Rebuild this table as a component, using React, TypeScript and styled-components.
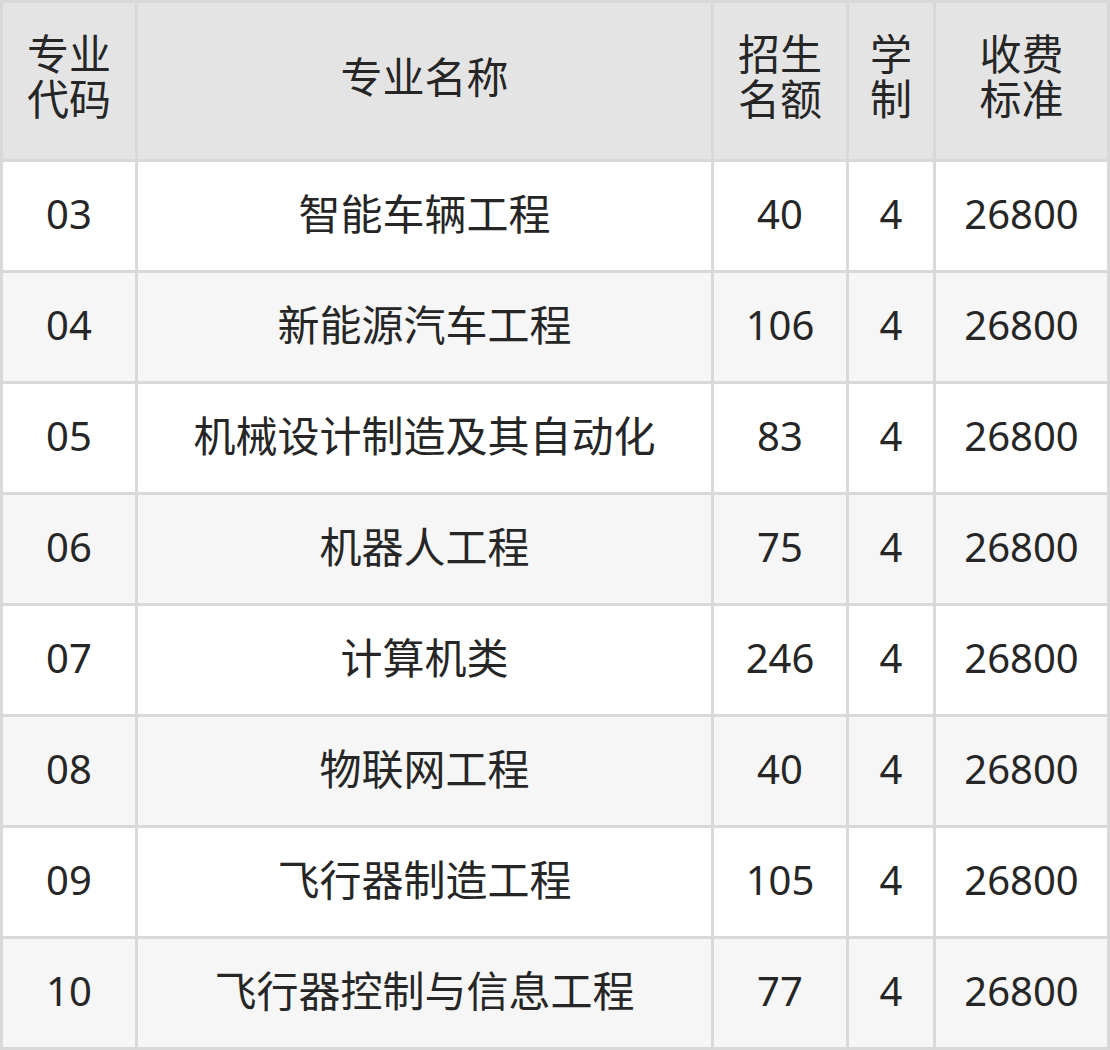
import React from 'react';
import styled, { createGlobalStyle } from 'styled-components';

interface Major {
    code: string;
    name: string;
    quota: number;
    years: number;
    fee: number;
}

const majors: Major[] = [
    { code: '03', name: '智能车辆工程', quota: 40, years: 4, fee: 26800 },
    { code: '04', name: '新能源汽车工程', quota: 106, years: 4, fee: 26800 },
    { code: '05', name: '机械设计制造及其自动化', quota: 83, years: 4, fee: 26800 },
    { code: '06', name: '机器人工程', quota: 75, years: 4, fee: 26800 },
    { code: '07', name: '计算机类', quota: 246, years: 4, fee: 26800 },
    { code: '08', name: '物联网工程', quota: 40, years: 4, fee: 26800 },
    { code: '09', name: '飞行器制造工程', quota: 105, years: 4, fee: 26800 },
    { code: '10', name: '飞行器控制与信息工程', quota: 77, years: 4, fee: 26800 },
];

const App: React.FC = () => {
    return (
        <>
            <GlobalStyle />
            <Table>
                <colgroup>
                    <col style={{ width: 132 }} />
                    <col style={{ width: 573 }} />
                    <col style={{ width: 132 }} />
                    <col style={{ width: 84 }} />
                    <col style={{ width: 171 }} />
                </colgroup>
                <thead>
                    <HeadRow>
                        <HeadCell>专业<br />代码</HeadCell>
                        <HeadCell>专业名称</HeadCell>
                        <HeadCell>招生<br />名额</HeadCell>
                        <HeadCell>学<br />制</HeadCell>
                        <HeadCell>收费<br />标准</HeadCell>
                    </HeadRow>
                </thead>
                <tbody>
                    {majors.map((m, i) => (
                        <Row key={m.code} striped={i % 2 === 1}>
                            <Cell>{m.code}</Cell>
                            <Cell cjk>{m.name}</Cell>
                            <Cell>{m.quota}</Cell>
                            <Cell>{m.years}</Cell>
                            <Cell>{m.fee}</Cell>
                        </Row>
                    ))}
                </tbody>
            </Table>
        </>
    );
};

// STYLES //
const GlobalStyle = createGlobalStyle`
    body {
        margin: 0;
        background: #ffffff;
        font-family: "Noto Sans", "Noto Sans CJK SC", sans-serif;
    }
`;

const Table = styled.table`
    width: 1110px;
    table-layout: fixed;
    border-collapse: separate;
    border-spacing: 3px;
    background: #d9d9d9;
    color: #262626;
    font-size: 40px;
`;

const HeadRow = styled.tr`
    height: 156px;
`;

const HeadCell = styled.th`
    padding: 0 0 10px;
    background: #e4e4e4;
    font-size: 42px;
    font-weight: 400;
    line-height: 45px;
    text-align: center;
    vertical-align: middle;
`;

const Row = styled.tr<{ striped: boolean }>`
    height: 108px;
    background: ${p => (p.striped ? '#f6f6f6' : '#ffffff')};
`;

const Cell = styled.td<{ cjk?: boolean }>`
    padding: 0 0 5px;
    font-size: ${p => (p.cjk ? '42px' : '40px')};
    line-height: 1;
    text-align: center;
    vertical-align: middle;
    white-space: nowrap;
`;

export default App;
